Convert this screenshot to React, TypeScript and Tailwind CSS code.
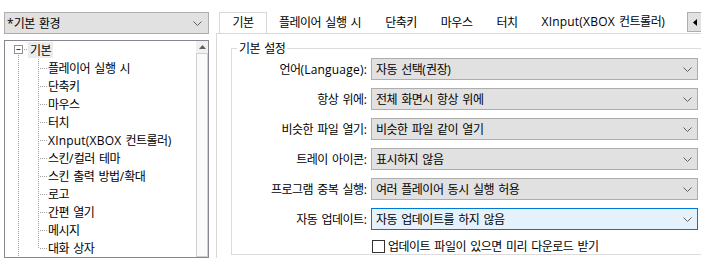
import React from "react";

const FONT = "font-['Noto_Sans_CJK_KR',sans-serif] tracking-[-0.5px] [word-spacing:2px]";

const TREE_CHILDREN = [
  "플레이어 실행 시",
  "단축키",
  "마우스",
  "터치",
  "XInput(XBOX 컨트롤러)",
  "스킨/컬러 테마",
  "스킨 출력 방법/확대",
  "로고",
  "간편 열기",
  "메시지",
  "대화 상자",
];

const TABS = ["플레이어 실행 시", "단축키", "마우스", "터치", "XInput(XBOX 컨트롤러)"];

const ROWS: { label: string; value: string; focused?: boolean }[] = [
  { label: "언어(Language):", value: "자동 선택(권장)" },
  { label: "항상 위에:", value: "전체 화면시 항상 위에" },
  { label: "비슷한 파일 열기:", value: "비슷한 파일 같이 열기" },
  { label: "트레이 아이콘:", value: "표시하지 않음" },
  { label: "프로그램 중복 실행:", value: "여러 플레이어 동시 실행 허용" },
  { label: "자동 업데이트:", value: "자동 업데이트를 하지 않음", focused: true },
];

// Latin runs get a wider font and normal tracking, Hangul keeps the tight CJK setting
function Txt({ children }: { children: string }) {
  const parts = children.split(/([A-Za-z()*:/]+)/);
  return (
    <span>
      {parts.map((p, i) =>
        /^[A-Za-z()*:/]+$/.test(p) ? (
          <span key={i} className="font-['Open_Sans',sans-serif] tracking-[0.2px]">
            {p}
          </span>
        ) : (
          p
        )
      )}
    </span>
  );
}

const Chevron = () => (
  <svg width="9" height="5" viewBox="0 0 9 5" className="shrink-0">
    <polyline points="0.5,0.5 4.5,4.5 8.5,0.5" fill="none" stroke="#606060" strokeWidth="1" />
  </svg>
);

// dotted guides for a child node of the tree
const ChildGuide = ({ last }: { last: boolean }) => (
  <svg width="43" height="18" className="shrink-0" stroke="#a0a0a0" strokeDasharray="1 1">
    <line x1="13.5" y1="0" x2="13.5" y2="18" />
    <line x1="33.5" y1="0" x2="33.5" y2={last ? 9 : 18} />
    <line x1="35" y1="9.5" x2="42" y2="9.5" />
  </svg>
);

const RootGuide = () => (
  <svg width="23" height="18" className="shrink-0">
    <rect x="9.5" y="4.5" width="8" height="8" fill="#fff" stroke="#919191" />
    <line x1="11.5" y1="8.5" x2="15.5" y2="8.5" stroke="#333" />
    <g stroke="#a0a0a0" strokeDasharray="1 1">
      <line x1="13.5" y1="14" x2="13.5" y2="18" />
      <line x1="19" y1="8.5" x2="23" y2="8.5" />
    </g>
  </svg>
);

function Select({ value, focused }: { value: string; focused?: boolean }) {
  return (
    <div
      className={
        focused
          ? "flex h-[22px] w-[327px] items-center justify-between border border-[#0078d7] bg-[#e5f1fb] pl-[4px] pr-[5px]"
          : "flex h-[22px] w-[327px] items-center justify-between border border-[#adadad] bg-[#e1e1e1] pl-[4px] pr-[5px]"
      }
    >
      <span className="leading-[16px]">
        <Txt>{value}</Txt>
      </span>
      <Chevron />
    </div>
  );
}

export default function App() {
  return (
    <div className={`flex h-[258px] w-[701px] overflow-hidden bg-white text-[12px] text-black ${FONT}`}>
      {/* left: profile combo + tree */}
      <div className="flex w-[209px] shrink-0 flex-col pl-[4px] pt-[12px]">
        <div className="flex h-[22px] w-[205px] items-center justify-between border border-[#adadad] bg-[#e1e1e1] pl-[2px] pr-[6px]">
          <span className="leading-[16px]">
            <Txt>*기본 환경</Txt>
          </span>
          <Chevron />
        </div>
        <div className="mt-[6px] flex w-[205px] flex-1 border border-[#828790]">
          <div className="flex flex-1 flex-col">
            <div className="flex h-[18px] items-center">
              <RootGuide />
              <span className="bg-[#ebebeb] px-[2px] leading-[16px]">기본</span>
            </div>
            {TREE_CHILDREN.map((item, i) => (
              <div key={item} className="flex h-[18px] items-center">
                <ChildGuide last={i === TREE_CHILDREN.length - 1} />
                <span className="leading-[16px] whitespace-nowrap">
                  <Txt>{item}</Txt>
                </span>
              </div>
            ))}
          </div>
          <div className="flex w-[12px] flex-col bg-[#f0f0f0]">
            <div className="flex h-[12px] items-center justify-center">
              <svg width="7" height="4" viewBox="0 0 7 4">
                <polygon points="0,4 3.5,0 7,4" fill="#606060" />
              </svg>
            </div>
            <div className="flex-1 border border-[#cfcfcf] bg-[#fafafa]" />
          </div>
        </div>
      </div>

      {/* right: tab control */}
      <div className="ml-[7px] flex w-[485px] shrink-0 flex-col overflow-hidden">
        <div className="flex h-[34px] shrink-0 items-end border-b border-[#d9d9d9]">
          <div className="flex flex-1 items-end overflow-hidden">
            <div className="-mb-px ml-[3px] flex h-[22px] w-[48px] shrink-0 items-center justify-center border border-b-0 border-[#d9d9d9] bg-white pb-[3px]">
              기본
            </div>
            {TABS.map((t) => (
              <div key={t} className="flex h-[20px] shrink-0 items-center px-[12px] pb-[3px] whitespace-nowrap">
                <Txt>{t}</Txt>
              </div>
            ))}
          </div>
          <div className="mb-[1px] mr-[-2px] flex h-[20px] w-[16px] shrink-0 items-center justify-center border border-[#adadad] bg-[#e1e1e1]">
            <svg width="4" height="7" viewBox="0 0 4 7">
              <polygon points="4,0 0,3.5 4,7" fill="#000" />
            </svg>
          </div>
        </div>

        <div className="flex-1 border-l border-[#d9d9d9] pl-[14px]">
          <fieldset className="mt-[6px] w-[480px] border border-[#dcdcdc]">
            <legend className="ml-[5px] px-[2px] leading-[16px]">기본 설정</legend>
            <div className="flex flex-col gap-[8px] pt-[2px]">
              {ROWS.map((r) => (
                <div key={r.label} className="flex items-center gap-[4px]">
                  <span className="w-[135px] text-right leading-[16px] whitespace-nowrap">
                    <Txt>{r.label}</Txt>
                  </span>
                  <Select value={r.value} focused={r.focused} />
                </div>
              ))}
              <div className="flex items-center gap-[3px] pl-[140px]">
                <div className="h-[13px] w-[13px] border border-[#333333] bg-white" />
                <span className="leading-[16px]">업데이트 파일이 있으면 미리 다운로드 받기</span>
              </div>
            </div>
          </fieldset>
        </div>
      </div>
    </div>
  );
}
